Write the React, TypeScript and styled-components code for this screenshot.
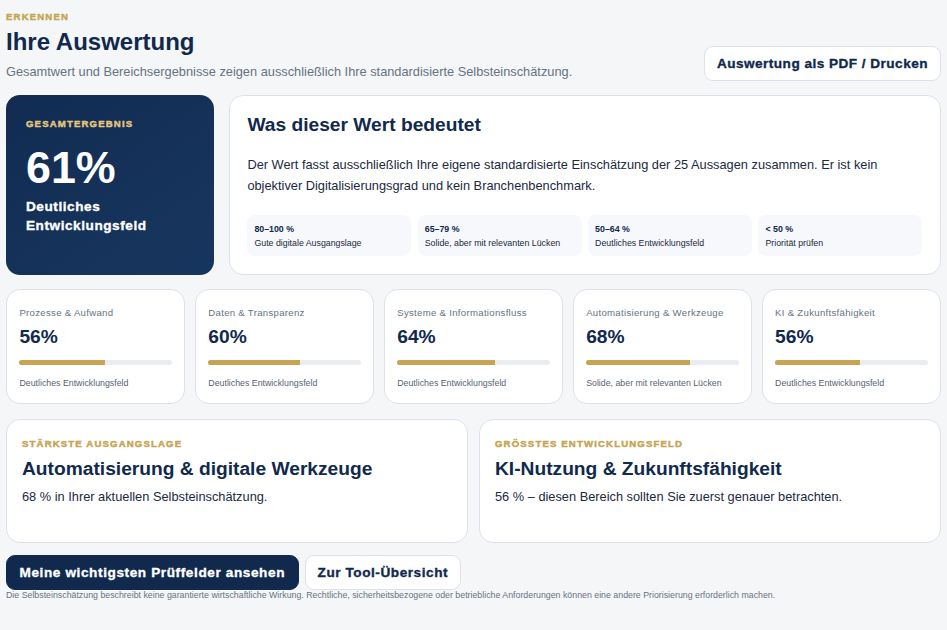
import React from "react";
import styled, { createGlobalStyle } from "styled-components";

const Global = createGlobalStyle`
  * { box-sizing: border-box; }
  html, body { margin: 0; background: #f5f6f8; }
  body { font-family: "Liberation Sans", Arial, sans-serif; color: #10233f; }
`;
const navy = "#10294d";
const gold = "#c6a452";

const Page = styled.main`
  width: 947px; height: 630px; padding: 11px 6px 0; overflow: hidden;
`;
const Head = styled.header`
  display: flex; justify-content: space-between; align-items: flex-end; margin-bottom: 14px;
`;
const HeadText = styled.div``;
const Eyebrow = styled.div`
  font-size: 9.6px; line-height: 11px; font-weight: 700; letter-spacing: 1.15px; color: ${gold}; text-transform: uppercase;
  -webkit-text-stroke: 0.45px ${gold};
`;
const Title = styled.h1`
  margin: 5px 0 0; font-size: 24px; line-height: 30px; font-weight: 700; color: ${navy};
`;
const Sub = styled.p`
  margin: 5px 0 0; font-size: 12.8px; line-height: 19px; color: #667382;
`;
const Btn = styled.button<{ $primary?: boolean }>`
  height: 35px; padding: 0 12px; border-radius: 9px; font: 700 13.6px "Liberation Sans", sans-serif; letter-spacing: 0.55px;
  color: ${p => (p.$primary ? "#fff" : navy)}; background: ${p => (p.$primary ? navy : "#fff")};
  border: 1px solid ${p => (p.$primary ? navy : "#dde2ea")}; -webkit-text-stroke: 0.35px currentColor;
`;
const PrintBtn = styled(Btn)`
  letter-spacing: 0.47px;
`;
const PrimaryBtn = styled(Btn)`
  letter-spacing: 0.6px; padding: 0 12.5px;
`;
const Top = styled.section`
  display: grid; grid-template-columns: 208px 1fr; gap: 15.4px; margin-bottom: 14px;
`;
const Score = styled.div`
  height: 180px; border-radius: 14px; padding: 23px 20px; color: #fff;
  background: linear-gradient(145deg, #122c52, #17365f);
`;
const ScoreLabel = styled(Eyebrow)`
  color: #e3c77d; -webkit-text-stroke-color: #e3c77d; letter-spacing: 1.15px;
`;
const ScoreVal = styled.div`
  font-size: 44.8px; line-height: 54px; font-weight: 700; margin-top: 11px;
`;
const ScoreText = styled.div`
  font-size: 13.6px; line-height: 19px; font-weight: 700; margin-top: 3px; letter-spacing: 0.55px;
  -webkit-text-stroke: 0.35px #fff;
`;
const Card = styled.div`
  background: #fff; border: 1px solid #dde2ea; border-radius: 14px;
`;
const Explain = styled(Card)`
  height: 180px; padding: 17px 17.6px 17px 17px;
`;
const H2 = styled.h2`
  margin: 0; font-size: 19.2px; line-height: 24px; font-weight: 700; color: ${navy};
`;
const Body = styled.p`
  margin: 18px 0 0; font-size: 12.8px; line-height: 20.5px; color: #1a2a40;
`;
const Ranges = styled.div`
  display: grid; grid-template-columns: repeat(4, 1fr); gap: 6.4px; margin-top: 19px;
`;
const Range = styled.div`
  background: #f6f8fb; border-radius: 8px; padding: 7px 7px; height: 41px;
  font-size: 8.8px; line-height: 14px; color: #1a2a40;
  b { display: block; color: ${navy}; }
`;
const Bars = styled.section`
  display: grid; grid-template-columns: repeat(5, 1fr); gap: 9.6px; margin-bottom: 15px;
`;
const Metric = styled(Card)`
  height: 115px; padding: 17px 12.4px 0;
`;
const MetricName = styled.div`
  font-size: 9.6px; line-height: 12px; color: #667382; letter-spacing: 0.3px;
`;
const MetricVal = styled.div`
  font-size: 19.2px; line-height: 24px; font-weight: 700; color: ${navy}; margin-top: 6px;
`;
const Track = styled.div`
  height: 5px; border-radius: 3px; background: #e9edf1; margin-top: 11px; overflow: hidden;
`;
const Fill = styled.div`
  height: 100%; background: ${gold};
`;
const MetricNote = styled.div`
  font-size: 8.8px; line-height: 11px; color: #566373; margin-top: 13px;
`;
const Pair = styled.section`
  display: grid; grid-template-columns: 1fr 1fr; gap: 11px; margin-bottom: 12px;
`;
const Focus = styled(Card)`
  height: 124px; padding: 18px 15px;
`;
const FocusTitle = styled.h3`
  margin: 8px 0 0; font-size: 19.2px; line-height: 24px; font-weight: 700; color: ${navy};
`;
const FocusText = styled.p`
  margin: 8px 0 0; font-size: 12.8px; line-height: 16px; color: #1a2a40;
`;
const Actions = styled.div`
  display: flex; gap: 6px;
`;
const Foot = styled.p`
  margin: 0; font-size: 8.8px; line-height: 11px; color: #667382;
`;

const metrics = [
  ["Prozesse & Aufwand", 56, "Deutliches Entwicklungsfeld"],
  ["Daten & Transparenz", 60, "Deutliches Entwicklungsfeld"],
  ["Systeme & Informationsfluss", 64, "Deutliches Entwicklungsfeld"],
  ["Automatisierung & Werkzeuge", 68, "Solide, aber mit relevanten Lücken"],
  ["KI & Zukunftsfähigkeit", 56, "Deutliches Entwicklungsfeld"],
] as const;
const ranges = [
  ["80–100 %", "Gute digitale Ausgangslage"],
  ["65–79 %", "Solide, aber mit relevanten Lücken"],
  ["50–64 %", "Deutliches Entwicklungsfeld"],
  ["< 50 %", "Priorität prüfen"],
];

export default function App() {
  return (
    <Page>
      <Global />
      <Head>
        <HeadText>
          <Eyebrow>Erkennen</Eyebrow>
          <Title>Ihre Auswertung</Title>
          <Sub>Gesamtwert und Bereichsergebnisse zeigen ausschließlich Ihre standardisierte Selbsteinschätzung.</Sub>
        </HeadText>
        <PrintBtn>Auswertung als PDF / Drucken</PrintBtn>
      </Head>
      <Top>
        <Score>
          <ScoreLabel>GESAMTERGEBNIS</ScoreLabel>
          <ScoreVal>61%</ScoreVal>
          <ScoreText>Deutliches<br />Entwicklungsfeld</ScoreText>
        </Score>
        <Explain>
          <H2>Was dieser Wert bedeutet</H2>
          <Body>Der Wert fasst ausschließlich Ihre eigene standardisierte Einschätzung der 25 Aussagen zusammen. Er ist kein objektiver Digitalisierungsgrad und kein Branchenbenchmark.</Body>
          <Ranges>
            {ranges.map(r => <Range key={r[0]}><b>{r[0]}</b>{r[1]}</Range>)}
          </Ranges>
        </Explain>
      </Top>
      <Bars>
        {metrics.map(m => (
          <Metric key={m[0]}>
            <MetricName>{m[0]}</MetricName>
            <MetricVal>{m[1]}%</MetricVal>
            <Track><Fill style={{ width: `${m[1]}%` }} /></Track>
            <MetricNote>{m[2]}</MetricNote>
          </Metric>
        ))}
      </Bars>
      <Pair>
        <Focus>
          <Eyebrow>STÄRKSTE AUSGANGSLAGE</Eyebrow>
          <FocusTitle>Automatisierung &amp; digitale Werkzeuge</FocusTitle>
          <FocusText>68 % in Ihrer aktuellen Selbsteinschätzung.</FocusText>
        </Focus>
        <Focus>
          <Eyebrow>GRÖSSTES ENTWICKLUNGSFELD</Eyebrow>
          <FocusTitle>KI-Nutzung &amp; Zukunftsfähigkeit</FocusTitle>
          <FocusText>56 % – diesen Bereich sollten Sie zuerst genauer betrachten.</FocusText>
        </Focus>
      </Pair>
      <Actions>
        <PrimaryBtn $primary>Meine wichtigsten Prüffelder ansehen</PrimaryBtn>
        <Btn>Zur Tool-Übersicht</Btn>
      </Actions>
      <Foot>Die Selbsteinschätzung beschreibt keine garantierte wirtschaftliche Wirkung. Rechtliche, sicherheitsbezogene oder betriebliche Anforderungen können eine andere Priorisierung erforderlich machen.</Foot>
    </Page>
  );
}
